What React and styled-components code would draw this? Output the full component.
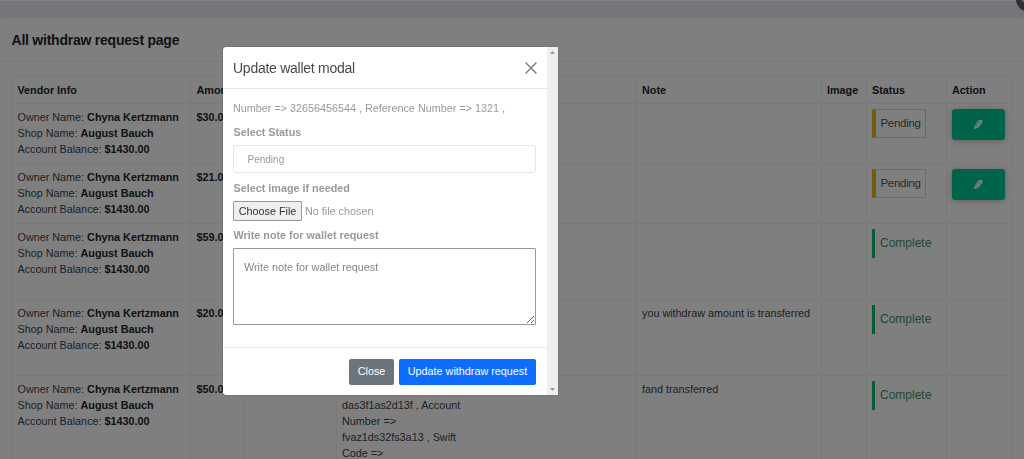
import React from "react";
import styled, { createGlobalStyle } from "styled-components";

const GlobalStyle = createGlobalStyle`
	* {
		box-sizing: border-box;
	}
	body {
		margin: 0;
		height: 459px;
		overflow: hidden;
		background: #e9ecf8;
		color: #212529;
		font-family: "Liberation Sans", Arial, sans-serif;
		font-size: 10.8px;
		line-height: 16px;
	}
`;

const Page = styled.div`
	height: 459px;
	overflow: hidden;
	border-top: 1px solid #fff;
`;

const Card = styled.div`
	margin-top: 17px;
	height: 520px;
	background: #fff;
	border-radius: 4px 4px 0 0;
`;

const CardHeader = styled.div`
	display: flex;
	align-items: center;
	height: 44px;
	padding: 0 11.5px;
	border-bottom: 1px solid #f3f3f5;
`;

const CardTitle = styled.h1`
	margin: 0;
	font-size: 14px;
	font-weight: bold;
	letter-spacing: -0.23px;
`;

const Table = styled.div`
	margin: 13px 11px 0;
	width: 1002px;
	border-top: 1px solid #f2f2f3;
	border-left: 1px solid #f2f2f3;
`;

const Row = styled.div`
	display: grid;
	grid-template-columns: 179px 54px 92px 300px 185px 45px 80px 66px;
	height: ${(props) => props.$height}px;
`;

const Cell = styled.div`
	padding: 5px 0 0 5px;
	border-right: 1px solid #f2f2f3;
	border-bottom: 1px solid #f2f2f3;
	color: #3c4248;
	white-space: nowrap;
	&:nth-child(-n + 2) {
		padding-left: 5.5px;
	}
	b {
		color: #212529;
	}
`;

const HeadCell = styled(Cell)`
	padding-top: 6px;
	color: #212529;
	font-weight: bold;
`;

const AccountInfo = styled.div`
	width: 130px;
`;

const PendingTag = styled.div`
	width: 54px;
	height: 29px;
	padding: 5px 0 0 4.5px;
	border: 1px solid #ffd75e;
	border-left: 4px solid #e8b71d;
	font-size: 11.5px;
	letter-spacing: -0.3px;
	color: #555;
`;

const CompleteTag = styled.div`
	height: 29px;
	padding: 6px 5px 0;
	border-left: 3px solid #10b86c;
	font-size: 12px;
	color: #3f8f66;
`;

const EditButton = styled.button`
	display: flex;
	align-items: center;
	justify-content: center;
	width: 53px;
	height: 31px;
	padding: 0;
	border: 0;
	border-radius: 3px;
	background: #00c896;
	color: #fff;
	box-shadow: 0 1px 7px rgba(0, 0, 0, 0.25);
`;

const Backdrop = styled.div`
	position: fixed;
	inset: 0;
	background: rgba(0, 0, 0, 0.5);
`;

const Widget = styled.div`
	position: fixed;
	top: -12px;
	right: -15px;
	width: 23px;
	height: 23px;
	border-radius: 50%;
	background: #302f33;
	color: #9b5cf0;
	svg {
		position: absolute;
		left: 5px;
		top: 9px;
	}
`;

const Modal = styled.div`
	position: fixed;
	top: 47px;
	left: 223px;
	display: flex;
	width: 335px;
	height: 348px;
	border-radius: 3px 0 0 3px;
	background: #fff;
	overflow: hidden;
	box-shadow: 0 0 1px rgba(0, 0, 0, 0.6);
`;

const ModalContent = styled.div`
	display: flex;
	flex-direction: column;
	width: 324px;
`;

const ModalHeader = styled.div`
	display: flex;
	align-items: center;
	justify-content: space-between;
	height: 42px;
	padding: 0 10px;
	border-bottom: 1px solid #e5e5ed;
	color: #484950;
	font-size: 14px;
	letter-spacing: -0.26px;
`;

const CloseIcon = styled.button`
	display: flex;
	padding: 0;
	border: 0;
	background: none;
	color: #777;
`;

const ModalBody = styled.div`
	flex: 1;
	padding: 11px 11px 0 10px;
	color: #999;
`;

const Info = styled.div`
	height: 24px;
`;

const Label = styled.label`
	display: block;
	height: ${(props) => props.$height}px;
	padding-left: 0.5px;
	font-weight: bold;
`;

const Select = styled.div`
	height: 28px;
	margin-bottom: 7px;
	padding: 6px 13.5px;
	border: 1px solid #e5e5ea;
	border-radius: 3px;
	font-size: 10px;
`;

const FileRow = styled.div`
	display: flex;
	align-items: center;
	gap: 3px;
	height: 20px;
	margin-bottom: 6px;
`;

const FileButton = styled.button`
	width: 69px;
	height: 20px;
	padding: 0;
	border: 1px solid #999;
	border-radius: 1px;
	background: #efefef;
	color: #333;
	font: inherit;
`;

const Note = styled.textarea`
	display: block;
	width: 303px;
	height: 77px;
	padding: 10px;
	border: 1px solid #999;
	border-radius: 1px;
	outline: 0;
	font: inherit;
	&::placeholder {
		color: #858585;
	}
`;

const ModalFooter = styled.div`
	display: flex;
	justify-content: flex-end;
	gap: 5px;
	height: 48px;
	padding: 11px 11px 0;
	border-top: 1px solid #e8e8ea;
`;

const Button = styled.button`
	width: ${(props) => props.$width}px;
	height: 26px;
	padding: 0 0 2px;
	border: 0;
	border-radius: 2px;
	background: ${(props) => (props.$primary ? "#0d6efd" : "#6c757d")};
	color: #fff;
	font: inherit;
`;

const Scrollbar = styled.div`
	display: flex;
	flex-direction: column;
	align-items: center;
	justify-content: space-between;
	width: 11px;
	padding: 4px 0;
	background: #f0f0f0;
`;

const Arrow = styled.div`
	width: 5px;
	height: 3px;
	background: #999;
	clip-path: ${(props) =>
		props.$up
			? "polygon(50% 0, 100% 100%, 0 100%)"
			: "polygon(0 0, 100% 0, 50% 100%)"};
`;

const heads = ["Vendor Info", "Amount", "", "", "Note", "Image", "Status", "Action"];

const requests = [
	{ amount: "$30.00", status: "Pending", height: 60 },
	{ amount: "$21.00", status: "Pending", height: 60 },
	{ amount: "$59.00", status: "Complete", height: 76 },
	{
		amount: "$20.00",
		status: "Complete",
		height: 76,
		note: "you withdraw amount is transferred",
	},
	{
		amount: "$50.00",
		status: "Complete",
		height: 120,
		note: "fand transferred",
		account: [
			"Account =>",
			"das3f1as2d13f , Account",
			"Number =>",
			"fvaz1ds32fs3a13 , Swift",
			"Code =>",
		],
	},
];

const PenIcon = () => (
	<svg width="11" height="11" viewBox="0 0 11 11" fill="none">
		<path
			d="M1 10l.8-3.4L4.6 3.2 4 2.8 6.4 1h2.4l.8 1.2-.8 2.2L5.6 8.2 3.4 9.4z"
			fill="currentColor"
		/>
		<path d="M2.6 8L5 5.2M5.2 3.2l2.6 2.2M6.6 2.4l.8.6" stroke="#00c896" strokeWidth="0.7" />
	</svg>
);

const RequestRow = ({ request }) => {
	const pending = request.status === "Pending";

	return (
		<Row $height={request.height}>
			<Cell>
				Owner Name: <b>Chyna Kertzmann</b>
				<br />
				Shop Name: <b>August Bauch</b>
				<br />
				Account Balance: <b>$1430.00</b>
			</Cell>
			<Cell>
				<b>{request.amount}</b>
			</Cell>
			<Cell />
			<Cell>
				<AccountInfo>
					{request.account &&
						request.account.map((line) => <div key={line}>{line}</div>)}
				</AccountInfo>
			</Cell>
			<Cell>{request.note}</Cell>
			<Cell />
			<Cell>
				{pending ? (
					<PendingTag>Pending</PendingTag>
				) : (
					<CompleteTag>Complete</CompleteTag>
				)}
			</Cell>
			<Cell>
				{pending && (
					<EditButton aria-label="Edit">
						<PenIcon />
					</EditButton>
				)}
			</Cell>
		</Row>
	);
};

const App = () => {
	return (
		<>
			<GlobalStyle />
			<Page>
				<Card>
					<CardHeader>
						<CardTitle>All withdraw request page</CardTitle>
					</CardHeader>
					<Table>
						<Row $height={28}>
							{heads.map((head, index) => (
								<HeadCell key={index}>{head}</HeadCell>
							))}
						</Row>
						{requests.map((request) => (
							<RequestRow key={request.amount} request={request} />
						))}
					</Table>
				</Card>
			</Page>
			<Backdrop />
			<Widget>
				<svg width="8" height="8" viewBox="0 0 8 8">
					<path d="M4 0l1 3 3 1-3 1-1 3-1-3-3-1 3-1z" fill="currentColor" />
				</svg>
			</Widget>
			<Modal>
				<ModalContent>
					<ModalHeader>
						Update wallet modal
						<CloseIcon aria-label="Close">
							<svg width="12" height="12" viewBox="0 0 12 12">
								<path
									d="M1 1l10 10M11 1L1 11"
									stroke="currentColor"
									strokeWidth="1.4"
									strokeLinecap="round"
								/>
							</svg>
						</CloseIcon>
					</ModalHeader>
					<ModalBody>
						<Info>Number =&gt; 32656456544 , Reference Number =&gt; 1321 ,</Info>
						<Label $height={21}>Select Status</Label>
						<Select>Pending</Select>
						<Label $height={21}>Select image if needed</Label>
						<FileRow>
							<FileButton>Choose File</FileButton>
							No file chosen
						</FileRow>
						<Label $height={21}>Write note for wallet request</Label>
						<Note placeholder="Write note for wallet request" />
					</ModalBody>
					<ModalFooter>
						<Button $width={45}>Close</Button>
						<Button $width={137} $primary>
							Update withdraw request
						</Button>
					</ModalFooter>
				</ModalContent>
				<Scrollbar>
					<Arrow $up />
					<Arrow />
				</Scrollbar>
			</Modal>
		</>
	);
};

export default App;
